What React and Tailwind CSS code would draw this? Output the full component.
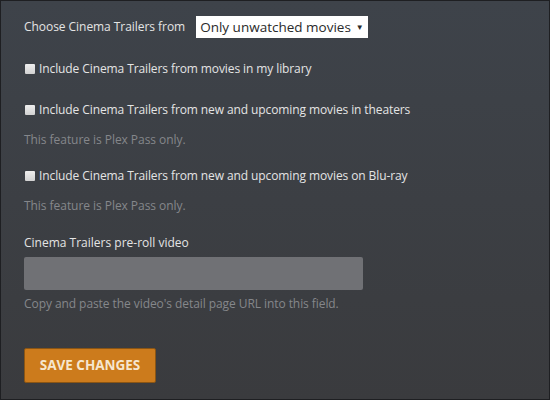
export default function App() {
  const rows = [
    { label: "Include Cinema Trailers from movies in my library", note: false, mt: "mt-[24px]" },
    { label: "Include Cinema Trailers from new and upcoming movies in theaters", note: true, mt: "mt-[27px]" },
    { label: "Include Cinema Trailers from new and upcoming movies on Blu-ray", note: true, mt: "mt-[21px]" },
  ];

  return (
    <div
      className="w-[550px] h-[400px] border border-[#1e1f22] bg-gradient-to-b from-[#3e434a] to-[#3a3b3e] text-[#e4e4e4] overflow-hidden"
      style={{ fontFamily: '"Open Sans", "Noto Sans", sans-serif' }}
    >
      <div className="pl-[23px] pt-[15px] flex flex-col items-start">
        {/* source select */}
        <div className="flex items-center h-[22px]">
          <span className="text-[12px] tracking-[-0.05px]">Choose Cinema Trailers from</span>
          <div className="ml-[11px] h-[22px] w-[172px] bg-white text-[#2a2a2a] flex items-center pl-[4px] text-[13.5px] whitespace-nowrap">
            Only unwatched movies
            <span className="ml-[5px] text-[8px] leading-none">▼</span>
          </div>
        </div>

        {/* checkboxes */}
        {rows.map((r, i) => (
          <div key={i} className={`${r.mt} flex flex-col`}>
            <label className="flex items-center h-[14px] text-[12px] tracking-[-0.1px] whitespace-nowrap">
              <span className="w-[10px] h-[10px] bg-gradient-to-b from-[#eeeeee] to-[#d2d2d2] rounded-[1px] ml-[1px] mr-[4px] shrink-0" />
              {r.label}
            </label>
            {r.note && (
              <div className="mt-[15px] text-[12px] leading-[16px] text-[#85878b] tracking-[-0.05px]">
                This feature is Plex Pass only.
              </div>
            )}
          </div>
        ))}

        {/* pre-roll */}
        <div className="mt-[21px] text-[12px] leading-[16px]">Cinema Trailers pre-roll video</div>
        <div className="mt-[6px] w-[339px] h-[33px] bg-[#707175] rounded-[2px]" />
        <div className="mt-[6px] text-[12px] leading-[16px] text-[#85878b] tracking-[-0.07px]">
          Copy and paste the video's detail page URL into this field.
        </div>

        <button className="mt-[36px] w-[132px] h-[35px] bg-[#cc7b1c] border border-[#8a5514] rounded-[2px] text-[#f6e7cf] font-bold text-[13.5px]">
          SAVE CHANGES
        </button>
      </div>
    </div>
  );
}
